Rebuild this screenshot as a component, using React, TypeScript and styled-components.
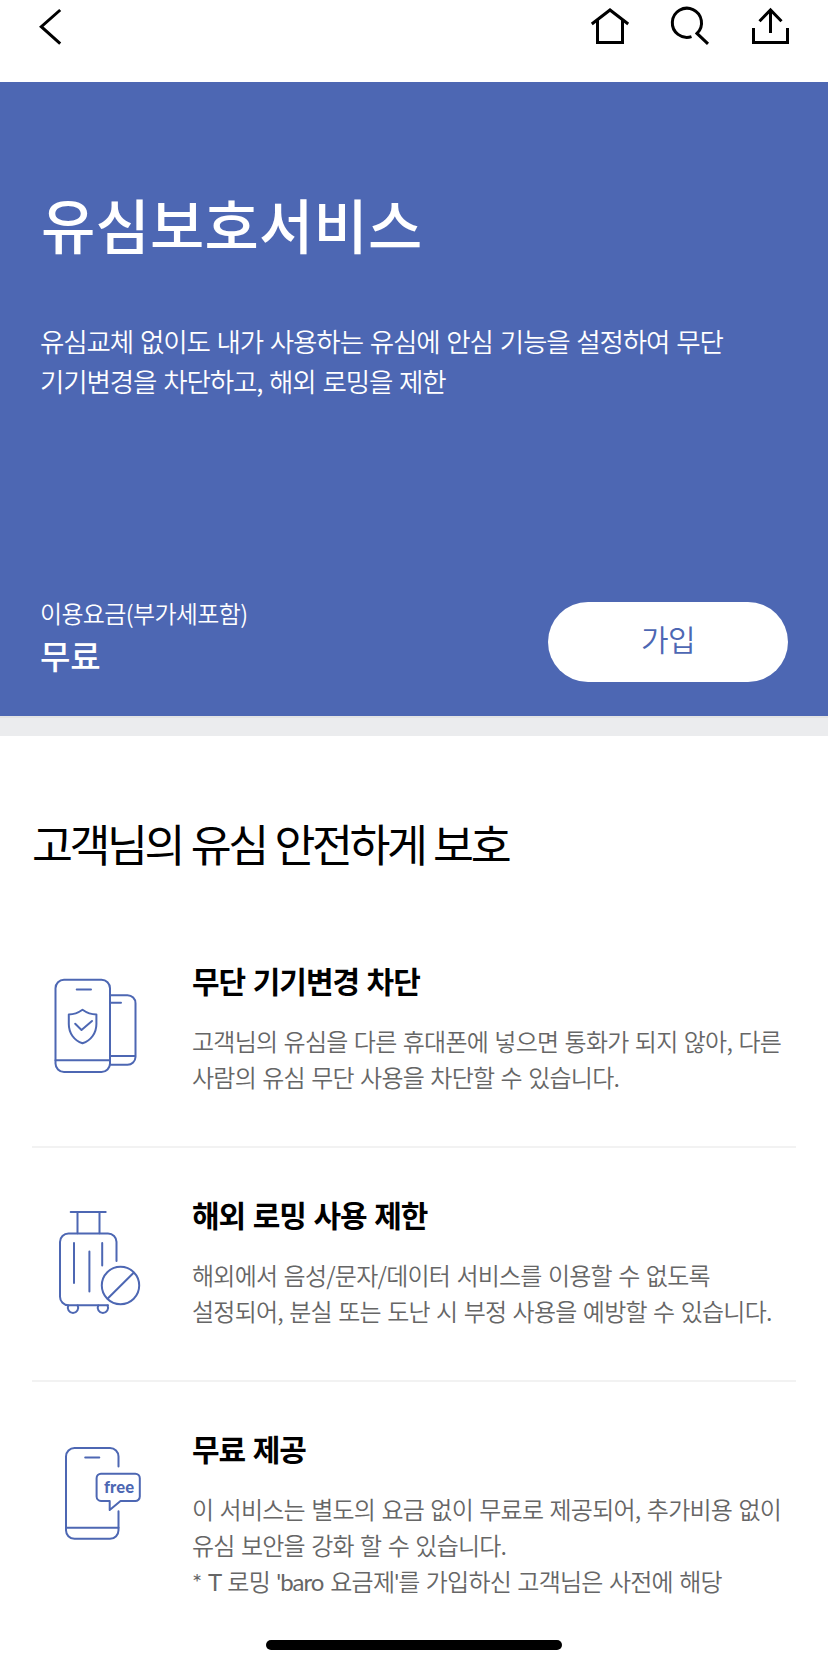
import React from "react";
import styled, { createGlobalStyle } from "styled-components";

const BLUE = "#4d67b3";

const GlobalStyle = createGlobalStyle`
  * { box-sizing: border-box; }
  body {
    margin: 0;
    background: #fff;
    font-family: "Noto Sans CJK KR", "Noto Sans", sans-serif;
  }
  h1, h2, h3, p, ul { margin: 0; padding: 0; }
  ul { list-style: none; }
`;

const Screen = styled.div`
  position: relative;
  width: 828px;
  height: 1666px;
  overflow: hidden;
  background: #fff;
  word-break: keep-all;
`;

const TopBar = styled.header`
  display: flex;
  justify-content: space-between;
  height: 82px;
  padding: 0 36px 0 32px;
`;

const Actions = styled.div`
  display: flex;
  gap: 32px;
`;

const IconButton = styled.button`
  display: block;
  width: 48px;
  height: 54px;
  padding: 0;
  border: 0;
  background: none;

  svg {
    display: block;
    fill: none;
    stroke: #000;
    stroke-width: 3;
  }
`;

const Hero = styled.section`
  display: flex;
  flex-direction: column;
  justify-content: space-between;
  height: 634px;
  padding: 102px 40px 34px;
  background: ${BLUE};
  color: #fff;
`;

const Title = styled.h1`
  padding-left: 1px;
  font-size: 59px;
  font-weight: 500;
  line-height: 80px;
  letter-spacing: 0.2px;
  white-space: nowrap;
`;

const Summary = styled.p`
  margin-top: 57px;
  font-size: 26.5px;
  font-weight: 350;
  line-height: 40px;
  letter-spacing: -1.11px;
  word-spacing: 2px;
  white-space: nowrap;
`;

const HeroFooter = styled.div`
  display: flex;
  align-items: flex-end;
  justify-content: space-between;
`;

const Fee = styled.div`
  padding-bottom: 3px;
`;

const FeeLabel = styled.p`
  font-size: 24px;
  font-weight: 350;
  line-height: 36px;
  letter-spacing: -0.65px;
`;

const FeeValue = styled.p`
  font-size: 33px;
  font-weight: 500;
  line-height: 48px;
  letter-spacing: -0.2px;
`;

const JoinButton = styled.button`
  width: 240px;
  height: 80px;
  padding: 0 0 8px;
  border: 0;
  border-radius: 40px;
  background: #fff;
  color: ${BLUE};
  font: 350 30px/1 "Noto Sans CJK KR", sans-serif;
  letter-spacing: -0.6px;
`;

const Separator = styled.div`
  height: 20px;
  border-top: 2px solid #e3e4e5;
  background: #ebecee;
`;

const Benefits = styled.section`
  padding: 77px 32px 0;
`;

const SectionTitle = styled.h2`
  height: 60px;
  margin-bottom: 41px;
  color: #000;
  font-size: 44.5px;
  font-weight: 400;
  line-height: 60px;
  letter-spacing: -3.4px;
  word-spacing: 2px;
  white-space: nowrap;
`;

const Item = styled.li`
  display: grid;
  grid-template-columns: 160px 1fr;
  height: 234px;
  padding-top: 46px;
  border-bottom: 2px solid #f2f2f2;

  &:last-child {
    border-bottom: 0;
  }
`;

const ItemIcon = styled.svg`
  margin-left: 8px;
  fill: none;
  stroke: ${BLUE};
  stroke-width: 2;
  stroke-linecap: round;
  stroke-linejoin: round;
`;

const BubbleText = styled.text`
  fill: ${BLUE};
  stroke: none;
  font-family: Lato, sans-serif;
  font-size: 16.5px;
  font-weight: 900;
`;

const ItemTitle = styled.h3`
  margin-bottom: 23px;
  color: #000;
  font-size: 30px;
  font-weight: 700;
  line-height: 40px;
  letter-spacing: -1px;
  word-spacing: 1.7px;
`;

const ItemText = styled.p`
  color: #666;
  font-size: 24px;
  font-weight: 350;
  line-height: 36px;
  letter-spacing: -0.76px;
  word-spacing: 1.7px;
  white-space: nowrap;
`;

const Latin = styled.span`
  font-family: Lato, sans-serif;
  font-weight: 400;
  letter-spacing: -1px;
`;

const HomeIndicator = styled.div`
  position: absolute;
  bottom: 16px;
  left: 266px;
  width: 296px;
  height: 10px;
  border-radius: 5px;
  background: #000;
`;

const PhoneShieldIcon = () => (
  <ItemIcon width="120" height="130" viewBox="0 0 120 130">
    <rect x="15.5" y="19.7" width="54.5" height="92.3" rx="8.5" />
    <path d="M15.5 100.2H70M36.7 29.6H51" />
    <path d="M70 35.2H87.5A8 8 0 0 1 95.5 43.2V97A8 8 0 0 1 87.5 104.8H70M70 96H95.5M70 42.7H81" />
    <path d="M42.5 49.8C38 53 34 54.5 28.8 54.5V64C28.8 73 34 80.5 42.5 83.3C51 80.5 56.4 73 56.4 64V54.5C51.5 54.5 47 53 42.5 49.8Z" />
    <path d="M35.2 63.8L41.5 70L52 61" />
  </ItemIcon>
);

const LuggageIcon = () => (
  <ItemIcon width="120" height="130" viewBox="0 0 120 130">
    <path d="M30.7 18H65.7M37.5 18V39.3M59.5 18V39.3" />
    <path d="M76.5 67V48A8.5 8.5 0 0 0 68 39.4H28.5A8.5 8.5 0 0 0 20 48V102.8A8.5 8.5 0 0 0 28.5 111.3H68" />
    <path d="M34 49V89M49.4 57.5V97.5M62.2 49V71.5" />
    <path d="M28.3 111.5A5.2 5.2 0 1 0 37.7 111.5M58.2 111.5A5.2 5.2 0 1 0 67.6 111.5" />
    <circle cx="80.5" cy="91.5" r="18.7" />
    <path d="M68 104.3L93.4 79" />
  </ItemIcon>
);

const FreePhoneIcon = () => (
  <ItemIcon width="120" height="130" viewBox="0 0 120 130">
    <path d="M78.5 38.5V28.5A8.5 8.5 0 0 0 70 20H34.5A8.5 8.5 0 0 0 26 28.5V102A8.5 8.5 0 0 0 34.5 110.8H70A8.5 8.5 0 0 0 78.5 102V83.3" />
    <path d="M26 99.7H78.5M45.2 29.5H59.3" />
    <path d="M61 45.7H95.3A4.5 4.5 0 0 1 99.8 50.2V68.5A4.5 4.5 0 0 1 95.3 73H80.5L69.7 82V73H61A4.5 4.5 0 0 1 56.6 68.5V50.2A4.5 4.5 0 0 1 61 45.7Z" />
    <BubbleText x="64" y="65" textLength="30">free</BubbleText>
  </ItemIcon>
);

const benefits: { Icon: React.FC; title: string; lines: React.ReactNode[] }[] = [
  {
    Icon: PhoneShieldIcon,
    title: "무단 기기변경 차단",
    lines: ["고객님의 유심을 다른 휴대폰에 넣으면 통화가 되지 않아, 다른", "사람의 유심 무단 사용을 차단할 수 있습니다."],
  },
  {
    Icon: LuggageIcon,
    title: "해외 로밍 사용 제한",
    lines: ["해외에서 음성/문자/데이터 서비스를 이용할 수 없도록", "설정되어, 분실 또는 도난 시 부정 사용을 예방할 수 있습니다."],
  },
  {
    Icon: FreePhoneIcon,
    title: "무료 제공",
    lines: [
      "이 서비스는 별도의 요금 없이 무료로 제공되어, 추가비용 없이",
      "유심 보안을 강화 할 수 있습니다.",
      <>
        <Latin>* T </Latin>로밍 <Latin>'baro </Latin>요금제<Latin>'</Latin>를 가입하신 고객님은 사전에 해당
      </>,
    ],
  },
];

const Lines = ({ lines }: { lines: React.ReactNode[] }) => (
  <>
    {lines.map((line, i) => (
      <React.Fragment key={i}>
        {i > 0 && <br />}
        {line}
      </React.Fragment>
    ))}
  </>
);

export default function App() {
  return (
    <Screen>
      <GlobalStyle />
      <TopBar>
        <IconButton aria-label="뒤로">
          <svg width="48" height="54" viewBox="32 0 48 54">
            <path d="M60.2 10L41.3 26.7L60.2 43.6" />
          </svg>
        </IconButton>
        <Actions>
          <IconButton aria-label="홈">
            <svg width="48" height="54" viewBox="584 0 48 54">
              <path d="M591.8 24L610 10L628.2 24M597.5 20.5V42.5H622.5V20.5" />
            </svg>
          </IconButton>
          <IconButton aria-label="검색">
            <svg width="48" height="54" viewBox="664 0 48 54">
              <path d="M691.5 36.7A14.6 14.6 0 1 1 697 33.4L708 43.8" />
            </svg>
          </IconButton>
          <IconButton aria-label="공유">
            <svg width="48" height="54" viewBox="744 0 48 54">
              <path d="M753.5 28V42.5H787.5V28M770.5 33V10M759.5 21.2L770.5 10L781.5 21.2" />
            </svg>
          </IconButton>
        </Actions>
      </TopBar>
      <Hero>
        <div>
          <Title>유심보호서비스</Title>
          <Summary>
            <Lines lines={["유심교체 없이도 내가 사용하는 유심에 안심 기능을 설정하여 무단", "기기변경을 차단하고, 해외 로밍을 제한"]} />
          </Summary>
        </div>
        <HeroFooter>
          <Fee>
            <FeeLabel>이용요금(부가세포함)</FeeLabel>
            <FeeValue>무료</FeeValue>
          </Fee>
          <JoinButton>가입</JoinButton>
        </HeroFooter>
      </Hero>
      <Separator />
      <Benefits>
        <SectionTitle>고객님의 유심 안전하게 보호</SectionTitle>
        <ul>
          {benefits.map(({ Icon, title, lines }) => (
            <Item key={title}>
              <Icon />
              <div>
                <ItemTitle>{title}</ItemTitle>
                <ItemText>
                  <Lines lines={lines} />
                </ItemText>
              </div>
            </Item>
          ))}
        </ul>
      </Benefits>
      <HomeIndicator />
    </Screen>
  );
}
